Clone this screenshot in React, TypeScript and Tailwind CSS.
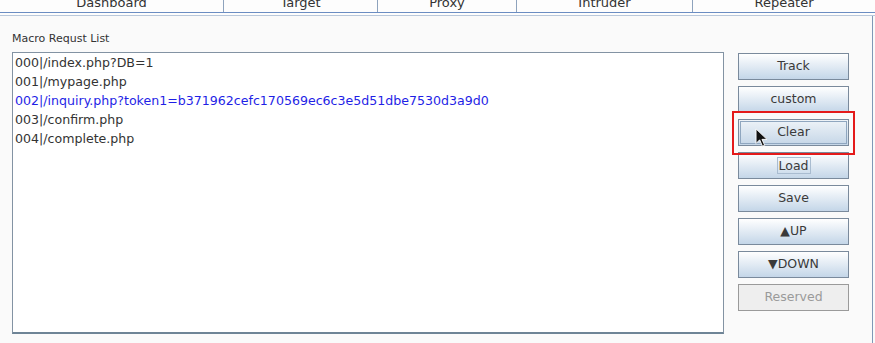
import React from "react";

const tabs = [
  { label: "Dashboard", w: "w-[224px]" },
  { label: "Target", w: "w-[154px]" },
  { label: "Proxy", w: "w-[139px]" },
  { label: "Intruder", w: "w-[176px]" },
  { label: "Repeater", w: "flex-1" },
];

const rows = [
  { t: "000|/index.php?DB=1", sel: false },
  { t: "001|/mypage.php", sel: false },
  { t: "002|/inquiry.php?token1=b371962cefc170569ec6c3e5d51dbe7530d3a9d0", sel: true },
  { t: "003|/confirm.php", sel: false },
  { t: "004|/complete.php", sel: false },
];

function Btn({ label, variant }: { label: React.ReactNode; variant?: "pressed" | "focus" | "disabled" }) {
  if (variant === "disabled") {
    return (
      <div className="h-[27px] w-[111px] border border-[#9a9a9a] bg-[#eeeeee] flex items-center justify-center text-[12.5px] text-[#9a9a9a]">
        {label}
      </div>
    );
  }
  if (variant === "pressed") {
    return (
      <div className="h-[27px] w-[111px] border border-[#7a8a9c] bg-gradient-to-b from-[#eef3f8] to-[#c5d6e7] p-[1px] flex">
        <div className="flex-1 border border-[#8fa6bf] flex items-center justify-center text-[12.5px] text-[#3a3a3a]">{label}</div>
      </div>
    );
  }
  return (
    <div className="h-[27px] w-[111px] border border-[#7a8a9c] bg-gradient-to-b from-[#ffffff] to-[#c4d6e8] flex items-center justify-center text-[12.5px] text-[#3a3a3a]">
      {variant === "focus" ? (
        <span className="border border-[#a9bcd0] px-[1px] leading-[15px]">{label}</span>
      ) : (
        label
      )}
    </div>
  );
}

export default function App() {
  return (
    <div
      className="w-[875px] h-[343px] bg-[#fafafa] overflow-hidden relative flex flex-col"
      style={{ fontFamily: '"DejaVu Sans", sans-serif' }}
    >
      <div className="h-[12px] flex bg-[#fdfdfd] overflow-hidden shrink-0">
        {tabs.map((t, i) => (
          <div
            key={t.label}
            className={`${t.w} h-[12px] flex justify-center text-[13px] text-[#333] ${i < tabs.length - 1 ? "border-r border-[#8ea3bd]" : ""}`}
          >
            <span className="mt-[-5px] leading-[16px]">{t.label}</span>
          </div>
        ))}
      </div>
      <div className="h-[1px] bg-[#6b8dc2] shrink-0" />
      <div className="h-[2px] bg-[#fdfdfd] shrink-0" />
      <div className="h-[1px] bg-[#b9c8db] shrink-0" />
      <div className="flex-1 flex mr-[2px] border-r border-[#7f98b6] bg-[#fafafa]">
        <div className="pl-[12px] pt-[12px] flex flex-col">
          <div className="text-[11px] leading-[22px] text-[#333]">Macro Requst List</div>
          <div className="mt-[2px] w-[712px] h-[282px] bg-white border border-[#8393a3] border-b-[#6e8496] border-b-2 pl-[2px]">
            {rows.map((r) => (
              <div
                key={r.t}
                className={`h-[19px] leading-[19px] text-[12.6px] ${r.sel ? "text-[#1f1fe6]" : "text-[#333]"}`}
              >
                {r.t}
              </div>
            ))}
          </div>
        </div>
        <div className="ml-[14px] pt-[37px] flex flex-col gap-[6px]">
          <Btn label="Track" />
          <Btn label="custom" />
          <div className="relative">
            <Btn label="Clear" variant="pressed" />
            <div className="absolute left-[-6px] top-[-8px] w-[123px] h-[44px] border-2 border-[#e41a1a]" />
          </div>
          <Btn label="Load" variant="focus" />
          <Btn label="Save" />
          <Btn label="▲UP" />
          <Btn label="▼DOWN" />
          <Btn label="Reserved" variant="disabled" />
        </div>
      </div>
      <svg className="absolute left-[755px] top-[128px]" width="13" height="20" viewBox="0 0 14 22">
        <path d="M1 1 L1 17 L5 13 L8 20 L10.5 19 L7.5 12.5 L13 12.5 Z" fill="#111" stroke="#fff" strokeWidth="1" />
      </svg>
    </div>
  );
}
